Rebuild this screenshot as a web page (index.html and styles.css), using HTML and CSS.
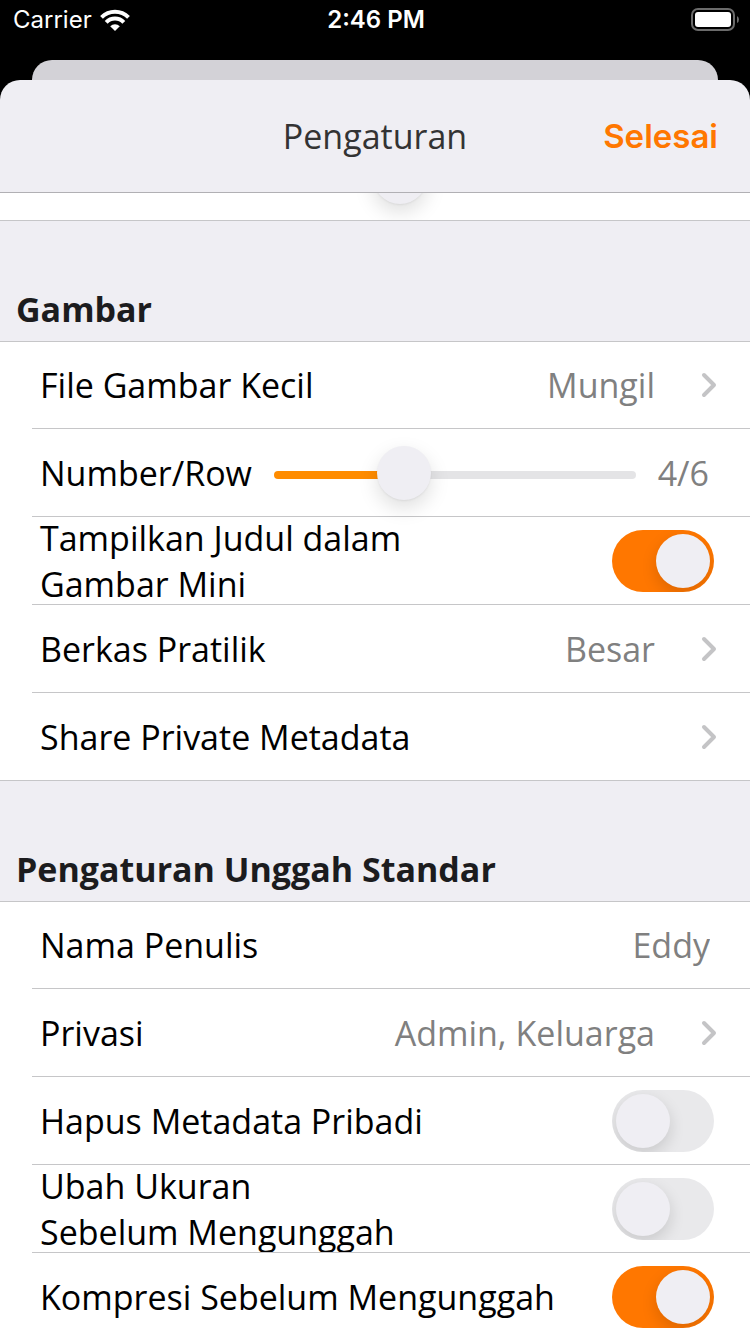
FILE: index.html
```
<!DOCTYPE html>
<html lang="id">
<head>
<meta charset="utf-8">
<meta name="viewport" content="width=device-width, initial-scale=1">
<title>Pengaturan</title>
<link rel="stylesheet" href="styles.css">
</head>
<body>
<svg class="defs" aria-hidden="true">
  <symbol id="chevron" viewBox="0 0 16 26">
    <path d="M3 3 L13 13 L3 23" fill="none" stroke="currentColor" stroke-width="4" stroke-linecap="round" stroke-linejoin="round"/>
  </symbol>
</svg>
<div class="app">
  <div class="status-bar">
    <div class="carrier">
      <span>Carrier</span>
      <svg class="wifi" viewBox="0 0 30 22" aria-hidden="true">
        <g fill="none" stroke="#fff" stroke-width="4">
          <path d="M1.5 8.3 A19.2 19.2 0 0 1 28.5 8.3"/>
          <path d="M6.2 13.3 A12 12 0 0 1 23.8 13.3"/>
        </g>
        <path d="M15 22 L10.2 17.2 A7 7 0 0 1 19.8 17.2 Z" fill="#fff"/>
      </svg>
    </div>
    <time class="clock">2:46 PM</time>
    <svg class="battery" viewBox="0 0 48 24" aria-hidden="true">
      <rect x="1" y="1" width="42" height="21" rx="6" fill="none" stroke="#6b6b6b" stroke-width="2"/>
      <rect x="4" y="4" width="36" height="15" rx="3" fill="#fff"/>
      <path d="M46 8 Q48 9 48 11.500 Q48 14 46 15 Z" fill="#6b6b6b"/>
    </svg>
  </div>
  <div class="back-sheet"></div>
  <main class="sheet">
    <header class="nav">
      <h1 class="nav-title">Pengaturan</h1>
      <button class="done" type="button">Selesai</button>
    </header>

    <div class="scrolled">
      <div class="row row-slider-only">
        <input class="slider slider-recent" type="range" min="0" max="28" value="9" aria-label="Jumlah">
      </div>
    </div>

    <section>
      <h2 class="section-title">Gambar</h2>
      <ul class="list">
        <li><button class="row" type="button">
          <span class="label">File Gambar Kecil</span><span class="value">Mungil</span>
          <svg class="chevron" aria-hidden="true"><use href="#chevron"/></svg>
        </button></li>
        <li><div class="row row-slider">
          <label class="label" for="per-row">Number/Row</label>
          <input class="slider" id="per-row" type="range" min="1" max="10" value="4">
          <output class="value" for="per-row">4/6</output>
        </div></li>
        <li><div class="row row-double">
          <label class="label" for="titles">Tampilkan Judul dalam<br>Gambar Mini</label>
          <input class="switch" id="titles" type="checkbox" role="switch" checked>
        </div></li>
        <li><button class="row" type="button">
          <span class="label">Berkas Pratilik</span><span class="value">Besar</span>
          <svg class="chevron" aria-hidden="true"><use href="#chevron"/></svg>
        </button></li>
        <li><button class="row" type="button">
          <span class="label">Share Private Metadata</span>
          <svg class="chevron" aria-hidden="true"><use href="#chevron"/></svg>
        </button></li>
      </ul>
    </section>

    <section>
      <h2 class="section-title">Pengaturan Unggah Standar</h2>
      <ul class="list">
        <li><div class="row row-text">
          <label class="label" for="author">Nama Penulis</label>
          <input class="value text-field" id="author" type="text" value="Eddy">
        </div></li>
        <li><button class="row" type="button">
          <span class="label">Privasi</span><span class="value">Admin, Keluarga</span>
          <svg class="chevron" aria-hidden="true"><use href="#chevron"/></svg>
        </button></li>
        <li><div class="row">
          <label class="label" for="strip">Hapus Metadata Pribadi</label>
          <input class="switch" id="strip" type="checkbox" role="switch">
        </div></li>
        <li><div class="row row-double">
          <label class="label" for="resize">Ubah Ukuran<br>Sebelum Mengunggah</label>
          <input class="switch" id="resize" type="checkbox" role="switch">
        </div></li>
        <li><div class="row">
          <label class="label" for="compress">Kompresi Sebelum Mengunggah</label>
          <input class="switch" id="compress" type="checkbox" role="switch" checked>
        </div></li>
      </ul>
    </section>
  </main>
</div>
</body>
</html>
```
FILE: styles.css
```
* { box-sizing: border-box; }

body {
  margin: 0;
  background: #000;
  font-family: "Open Sans", "Noto Sans", sans-serif;
  font-size: 34px;
  line-height: 46px;
  color: #000;
}

button, input {
  margin: 0;
  padding: 0;
  border: 0;
  background: none;
  color: inherit;
  font: inherit;
}

h1, h2, ul { margin: 0; padding: 0; }

.defs { position: absolute; width: 0; height: 0; }

.app {
  display: flex;
  flex-direction: column;
  height: 100vh;
  overflow: hidden;
}

/* Status bar */
.status-bar {
  display: grid;
  grid-template-columns: 1fr auto 1fr;
  align-items: center;
  flex: none;
  padding: 0 11px 20px 13px;
  color: #fff;
  font-family: Inter, Roboto, sans-serif;
  font-size: 24px;
  line-height: 40px;
}

.carrier { display: flex; align-items: center; gap: 8px; }
.wifi { width: 30px; height: 22px; }
.clock { font-weight: 600; }
.battery { width: 48px; height: 24px; justify-self: end; }

/* Sheets */
.back-sheet {
  flex: none;
  height: 20px;
  margin: 0 32px;
  border-radius: 20px 20px 0 0;
  background: #d3d2d7;
}

.sheet {
  flex: 1;
  min-height: 0;
  overflow: hidden;
  border-radius: 20px 20px 0 0;
  background: #efeef3;
}

.nav {
  display: grid;
  grid-template-columns: 1fr auto 1fr;
  align-items: center;
  padding: 33px 32px;
  border-bottom: 1px solid #b1b0b4;
}

.nav-title { grid-column: 2; font-size: 34px; font-weight: 400; color: #333; }

.done {
  justify-self: end;
  color: #ff7700;
  font-family: Inter, Roboto, sans-serif;
  font-size: 33px;
  font-weight: 600;
}

/* Lists */
.section-title {
  padding: 65px 16px 9px;
  font-size: 34px;
  font-weight: 700;
  color: #1c1c1e;
}

.list {
  list-style: none;
  border-top: 1px solid #c6c6c8;
  background: #fff;
}

.list li {
  margin-left: 32px;
  border-bottom: 1px solid #c6c6c8;
}

.list li:last-child { margin-left: 0; padding-left: 32px; }

.row {
  display: flex;
  align-items: center;
  width: 100%;
  min-height: 87px;
  padding: 0 33px 0 8px;
  text-align: left;
}

.list li:first-child .row { min-height: 86px; }

.label { flex: 1; white-space: nowrap; }
.value { color: #808080; }

.chevron {
  width: 16px;
  height: 26px;
  margin-left: 46px;
  color: #c4c4c6;
}

.row-text { padding-right: 40px; }
.text-field { width: 240px; text-align: right; outline: none; }

.row-double { height: 87px; overflow: hidden; }

/* Rows scrolled partly under the navigation bar */
.scrolled {
  display: flex;
  align-items: flex-end;
  height: 28px;
  overflow: hidden;
  border-bottom: 1px solid #c6c6c8;
  background: #fff;
}

.row-slider-only { flex: none; padding: 0 114px 0 274px; }

/* Slider */
.row-slider { gap: 22px; padding-right: 41px; }
.row-slider .label { flex: none; }

.slider {
  --fill: 36%;
  -webkit-appearance: none;
  appearance: none;
  flex: 1;
  min-width: 0;
  height: 60px;
  padding-top: 4px;
}

.slider::-webkit-slider-runnable-track {
  height: 8px;
  border-radius: 4px;
  background: linear-gradient(to right, #ff8c00 var(--fill), #e4e4e6 var(--fill));
}

.slider::-webkit-slider-thumb {
  -webkit-appearance: none;
  width: 54px;
  height: 54px;
  margin-top: -25px;
  border-radius: 50%;
  background: #efeef3;
  box-shadow: 0 1px 2px rgba(0, 0, 0, 0.06), 0 8px 20px rgba(0, 0, 0, 0.13);
}

/* Switch */
.switch {
  -webkit-appearance: none;
  appearance: none;
  display: flex;
  flex: none;
  width: 102px;
  height: 62px;
  padding: 4px;
  overflow: hidden;
  border-radius: 31px;
  background: #e9e9eb;
}

.switch::before {
  content: "";
  width: 54px;
  height: 54px;
  border-radius: 50%;
  background: #efeef3;
  box-shadow: 0 6px 16px rgba(0, 0, 0, 0.14);
}

.switch:checked { justify-content: flex-end; background: #ff7700; }

.row:has(.switch) { padding-right: 36px; }
```
